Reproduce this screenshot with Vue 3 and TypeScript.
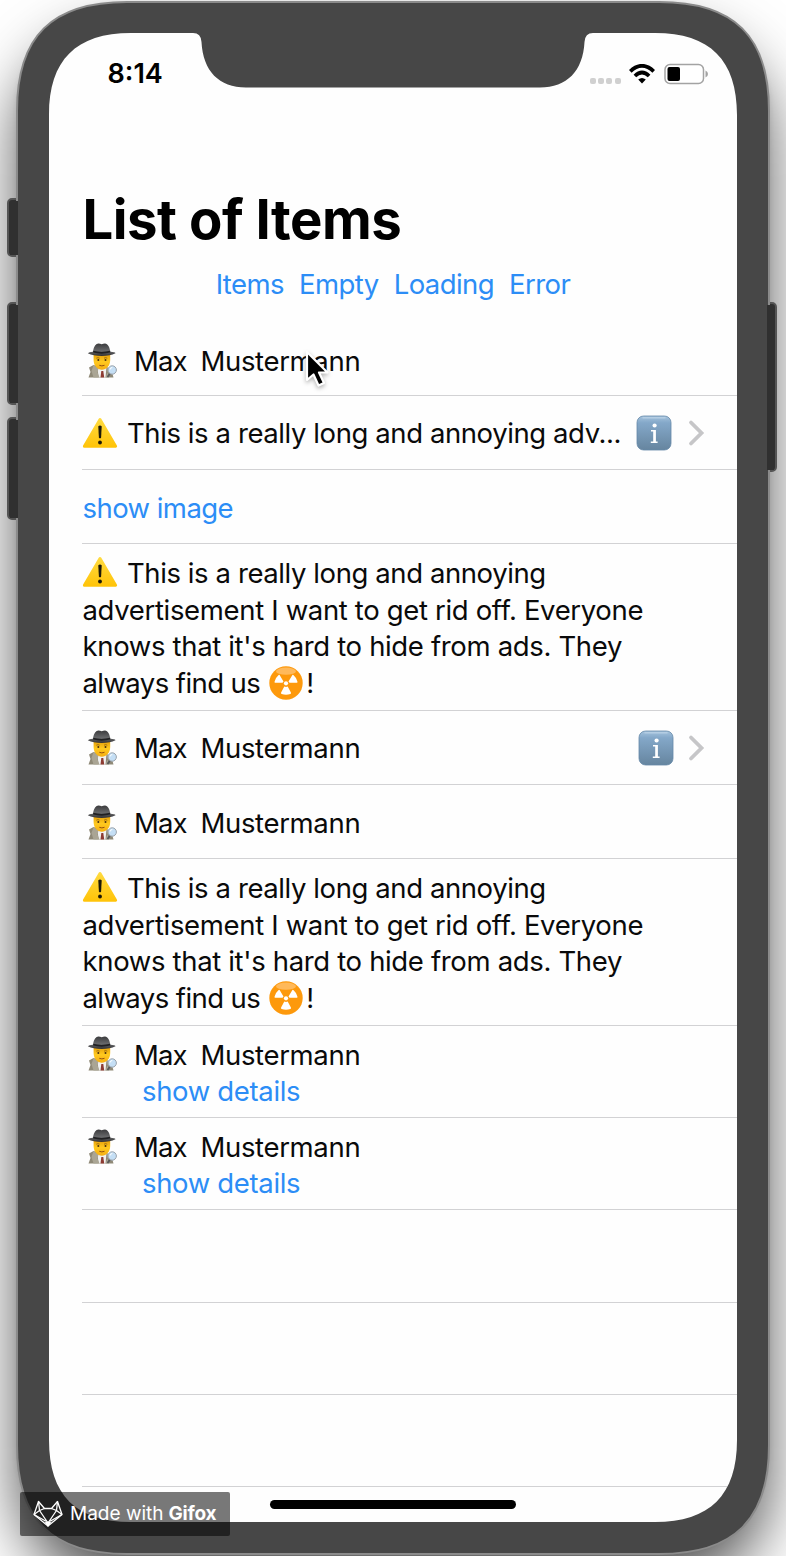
<script setup lang="ts">
type Kind = 'person' | 'adLine' | 'image' | 'adFull' | 'details' | 'blank'
interface Row {
  kind: Kind
  height: string
  disclosure?: boolean
}

const tabs = ['Items', 'Empty', 'Loading', 'Error']
const adLines = [
  'This is a really long and annoying',
  'advertisement I want to get rid off. Everyone',
  "knows that it's hard to hide from ads. They",
]
const rows: Row[] = [
  { kind: 'person', height: 'h-first' },
  { kind: 'adLine', height: 'h-single', disclosure: true },
  { kind: 'image', height: 'h-single' },
  { kind: 'adFull', height: 'h-ad' },
  { kind: 'person', height: 'h-single', disclosure: true },
  { kind: 'person', height: 'h-single' },
  { kind: 'adFull', height: 'h-ad' },
  { kind: 'details', height: 'h-double' },
  { kind: 'details', height: 'h-double' },
  { kind: 'blank', height: 'h-double' },
  { kind: 'blank', height: 'h-double' },
  { kind: 'blank', height: 'h-double' },
]
</script>

<template>
  <div class="stage">
    <div class="shadow"></div>
    <svg class="device" viewBox="0 0 786 1556" width="786" height="1556">
      <defs>
        <linearGradient id="hat" x1="0" y1="0" x2="0" y2="1">
          <stop offset="0" stop-color="#3b3b3d" />
          <stop offset="0.6" stop-color="#68696b" />
          <stop offset="1" stop-color="#303032" />
        </linearGradient>
        <linearGradient id="face" x1="0" y1="0" x2="0" y2="1">
          <stop offset="0" stop-color="#e39b08" />
          <stop offset="0.5" stop-color="#ffc91f" />
          <stop offset="1" stop-color="#f5ae12" />
        </linearGradient>
        <linearGradient id="warn" x1="0" y1="0" x2="0" y2="1">
          <stop offset="0" stop-color="#ffda3e" />
          <stop offset="1" stop-color="#ffc40a" />
        </linearGradient>
        <linearGradient id="info" x1="0" y1="0" x2="0" y2="1">
          <stop offset="0" stop-color="#a5c3dd" />
          <stop offset="0.2" stop-color="#84a8c9" />
          <stop offset="1" stop-color="#66859f" />
        </linearGradient>
        <symbol id="i-detective" viewBox="0 0 30 35">
          <path d="M1.500 34.500 3.500 29 2 24.500l4.500-2.500 5 1.500h7l5.500 2.500 2.500 8.500z" fill="#8f8977" />
          <path d="M10.500 24h9l-1 10.500h-7z" fill="#f1f1f0" />
          <path d="M14.300 28h2l.9 6.500h-3.700z" fill="#8d3b32" />
          <path d="M6.500 22 11.500 25.500l-1 4 2 5H6.500L4.500 28z" fill="#aaa594" />
          <path d="M20 24.500l3 2-3 4-1.500 4h3z" fill="#aaa594" />
          <path d="M6.600 10.500h16.600v6.500c0 5.900-3.900 9.800-8.300 9.800s-8.300-3.900-8.300-9.800z" fill="url(#face)" />
          <path d="M9.300 15.200q1.700-1 3.300 0M17 15.200q1.700-1 3.300 0" stroke="#8b5c0d" stroke-width=".8" fill="none" />
          <circle cx="11.300" cy="17" r="1" fill="#49310e" />
          <circle cx="18.500" cy="17" r="1" fill="#49310e" />
          <path d="M12.300 22.300q2.500 1.200 5.200 0" stroke="#95510e" stroke-width="1" fill="none" />
          <path d="M.8 10.300Q2 8.700 6 8.800C6.800 3 9 .6 11.400.5q1.800 0 3.300.7 1.500-.7 3.300-.7C20.800.7 22.700 4 23.300 8.800q4.500-.1 5.200 1.500Q23 13 14.700 13T.8 10.300z" fill="url(#hat)" />
          <path d="M6.200 7.800q8.200 2.200 17 0v1.800q-8.800 2.300-17 0z" fill="#202022" />
          <path d="M23 30.500 20.500 34" stroke="#55575a" stroke-width="1.800" />
          <circle cx="25.200" cy="27" r="4.200" fill="#c5dff5" stroke="#9aa2aa" stroke-width="1" />
          <path d="M23.200 26.500q.3-1.900 2.200-2.200" stroke="#fff" stroke-width="1" fill="none" />
        </symbol>
        <symbol id="i-warning" viewBox="0 0 36 32">
          <path d="M18 2.500 33.600 29.300H2.400z" fill="url(#warn)" stroke="url(#warn)" stroke-width="3" stroke-linejoin="round" />
          <path d="M16.300 9.300q1.700-1.700 3.400 0l-.6 11.400q-1.100 1.300-2.200 0z" fill="#1c1808" />
          <circle cx="18" cy="25.500" r="1.900" fill="#1c1808" />
        </symbol>
        <symbol id="i-info" viewBox="0 0 36 36">
          <rect x="1" y="1" width="34" height="34" rx="6.500" fill="url(#info)" stroke="#6689a8" stroke-width=".8" />
          <path d="M7 2.800h22" stroke="#b4cde3" stroke-width="1.500" stroke-linecap="round" />
          <circle cx="18.600" cy="10.500" r="2.100" fill="#fff" />
          <path d="M15 15h4.900v11.600h1.700v1.400h-6.800v-1.400h2.400v-10.200h-2.200z" fill="#fff" />
        </symbol>
        <symbol id="i-radio" viewBox="0 0 34 34">
          <circle cx="17" cy="17" r="16.700" fill="#fd990c" />
          <ellipse cx="17" cy="5.200" rx="10" ry="3.600" fill="#ffb95a" />
          <circle cx="17" cy="17.300" r="2.100" fill="#fff" />
          <path d="M13.500 16.800H6.200q-1 0-.6-1.400 1.200-4 3.800-6.200 1-.8 1.500.2l3.600 6z" fill="#fff" />
          <path d="M20.500 16.800h7.300q1 0 .6-1.400-1.200-4-3.800-6.200-1-.8-1.500.2l-3.600 6z" fill="#fff" />
          <path d="M15.300 20.500 12.100 26.500q-.5 1 .5 1.400 4.400 1.500 8.800 0 1-.4.500-1.400l-3.200-6-1.700.6z" fill="#fff" />
        </symbol>
      </defs>
      <g fill="#303030" stroke="#555" stroke-width="2">
        <rect x="8" y="199" width="14" height="57" rx="4" />
        <rect x="8" y="303" width="14" height="101" rx="4" />
        <rect x="8" y="418" width="14" height="101" rx="4" />
        <rect x="762" y="303" width="14" height="168" rx="4" />
      </g>
      <path d="M17 111C17 36 52 2 127 2H659C734 2 769 36 769 111V1445C769 1520 734 1554 659 1554H127C52 1554 17 1520 17 1445z" fill="#474747" stroke="#8b8b8b" stroke-width="2" />
      <g fill="#303030">
        <rect x="10" y="201" width="8" height="54" />
        <rect x="10" y="305" width="8" height="98" />
        <rect x="10" y="420" width="8" height="98" />
        <rect x="767" y="305" width="7" height="165" />
      </g>
      <path d="M49 115C49 60 76 33 131 33H193Q201 33 201.500 42C203 71 219 87.500 246 87.500H540C567 87.500 583 71 584.500 42Q585 33 593 33H655C710 33 737 60 737 115V1440C737 1495 710 1522 655 1522H131C76 1522 49 1495 49 1440z" fill="#fefefe" />
    </svg>

    <div class="screen">
      <header class="status">
        <span class="time">8:14</span>
        <div class="indicators">
          <i v-for="n in 4" :key="n" class="dot"></i>
          <svg class="wifi" viewBox="0 0 26 20" width="26" height="20">
            <g fill="none" stroke="#000" stroke-width="3.800">
              <path d="M1.300 7.300Q13-3.600 24.700 7.300" />
              <path d="M5.900 12Q13 5.200 20.100 12" />
            </g>
            <path d="M9.200 15.500Q13 12.400 16.800 15.500L13 19.500z" />
          </svg>
          <svg class="battery" viewBox="0 0 45 22" width="45" height="22">
            <rect x="1" y="1.500" width="38.500" height="19" rx="5" fill="#fff" stroke="#a3a3a3" stroke-width="1.500" />
            <rect x="3.500" y="4" width="12.500" height="14" rx="2" />
            <path d="M41.500 7.500q2.500 1 2.500 3.500t-2.500 3.500z" fill="#a3a3a3" />
          </svg>
        </div>
      </header>

      <h1>List of Items</h1>
      <nav>
        <a v-for="tab in tabs" :key="tab">{{ tab }}</a>
      </nav>

      <ul>
        <li v-for="(row, index) in rows" :key="index" :class="[row.kind, row.height, { linked: row.disclosure }]">
          <div v-if="row.kind === 'person' || row.kind === 'details'" class="person-line">
            <svg class="detective" width="30" height="35"><use href="#i-detective" /></svg>
            <span class="first-name">Max</span><span class="last-name">Mustermann</span>
          </div>
          <a v-if="row.kind === 'details'" class="details-link">show details</a>
          <a v-if="row.kind === 'image'" class="image-link">show image</a>
          <template v-if="row.kind === 'adLine'">
            <svg class="warning" width="36" height="32"><use href="#i-warning" /></svg>
            <span class="ad-short">This is a really long and annoying adv...</span>
          </template>
          <template v-if="row.kind === 'adFull'">
            <div v-for="(line, n) in adLines" :key="n" :class="['ad-line', 'ad-' + n]">
              <svg v-if="n === 0" class="warning" width="36" height="32"><use href="#i-warning" /></svg>
              <span>{{ line }}</span>
            </div>
            <div class="ad-line ad-last">
              <span>always find us</span>
              <svg class="radio" width="34" height="34"><use href="#i-radio" /></svg>
              <span>!</span>
            </div>
          </template>
          <div v-if="row.disclosure" class="disclosure">
            <svg width="36" height="36"><use href="#i-info" /></svg>
            <svg class="chevron" viewBox="0 0 17 28" width="17" height="28">
              <path d="M3 3.500 13.500 14 3 24.500" fill="none" stroke="#c6c6c8" stroke-width="3.800" stroke-linecap="round" />
            </svg>
          </div>
        </li>
      </ul>
    </div>

    <div class="home-bar"></div>
    <svg class="cursor" viewBox="0 0 28 42" width="28" height="42">
      <path d="M3 2V30L9.500 24.500 14.500 35.500 20 33 15 22.500H23.500z" fill="#000" stroke="#fff" stroke-width="2.200" stroke-linejoin="round" />
    </svg>
    <div class="badge">
      <svg viewBox="0 0 30 28" width="30" height="28">
        <g fill="none" stroke="#fff" stroke-width="1.300" stroke-linejoin="round">
          <path d="M5.500 1.500 1 14.500 15 26 29 14.500 24.500 1.500 18.500 8.500h-7z" />
          <path d="M5.500 1.500 6.500 10.500 1 14.500M24.500 1.500 23.500 10.500 29 14.500M11.500 8.500 6.500 10.500 15 23 23.500 10.500 18.500 8.500M1 14.500 12.500 21M29 14.500 17.500 21" />
        </g>
        <path d="M11.500 21.500h7L15 27z" fill="#fff" />
      </svg>
      <span class="made">Made with</span><b>Gifox</b>
    </div>
  </div>
</template>

<style>
body {
  margin: 0;
  background: #fff;
}
</style>

<style scoped>
.stage {
  position: relative;
  width: 786px;
  height: 1556px;
  overflow: hidden;
  background: #fff;
  color: #0a0a0a;
  font-family: Inter, "Liberation Sans", sans-serif;
  font-size: 27.500px;
  line-height: 36.500px;
}
.shadow {
  position: absolute;
  inset: 4px 18px;
  border-radius: 102px;
  background: #777;
  box-shadow: 0 34px 62px rgba(0, 0, 0, 0.68), 0 0 6px rgba(0, 0, 0, 0.15);
}
.device {
  position: absolute;
  inset: 0;
}
.screen {
  position: relative;
  box-sizing: border-box;
  width: 688px;
  height: 1522px;
  margin-left: 49px;
  padding-top: 33px;
  overflow: hidden;
  border-radius: 72px;
}
.status {
  display: flex;
  justify-content: space-between;
  align-items: center;
  height: 82px;
  padding: 0 28px 0 58.500px;
}
.time {
  padding-top: 1px;
  color: #000;
  font-size: 27px;
  font-weight: 600;
}
.indicators {
  display: flex;
  align-items: center;
}
.dot {
  width: 6px;
  height: 6px;
  margin: 13px 2.300px 0 0;
  border-radius: 2px;
  background: #d0d0d0;
}
.wifi {
  margin: 0 9px 0 6px;
}
h1 {
  height: 70px;
  margin: 69px 0 0 33.500px;
  color: #000;
  font-size: 54.500px;
  font-weight: 700;
  letter-spacing: -0.5px;
  line-height: 70px;
  white-space: nowrap;
}
nav {
  display: flex;
  justify-content: center;
  gap: 15px;
  height: 37px;
  margin: 12px 0 18px;
  letter-spacing: -0.56px;
}
a {
  color: #2c8df6;
}
ul {
  margin: 0;
  padding: 0 0 0 33px;
  list-style: none;
}
li {
  display: flex;
  box-sizing: border-box;
  align-items: center;
  border-bottom: 1px solid #d2d2d4;
  letter-spacing: -0.34px;
  white-space: nowrap;
}
.h-first {
  height: 75px;
  padding-top: 6px;
}
.h-single {
  height: 74px;
  padding-top: 3px;
}
.h-single.linked {
  padding-top: 2px;
}
.h-ad {
  height: 167px;
  padding-top: 11.100px;
}
.h-double {
  height: 92.200px;
  padding-top: 10.600px;
}
.adFull,
.details {
  flex-direction: column;
  align-items: flex-start;
}
.person-line,
.ad-line {
  display: flex;
  align-items: center;
  height: 36.500px;
  flex: none;
}
.detective {
  margin: -2px 17px 0 5px;
}
.first-name {
  width: 66.500px;
  letter-spacing: -0.9px;
}
.warning {
  margin: -2px 9px 0 0;
}
.ad-short,
.ad-0 {
  letter-spacing: -0.41px;
}
.ad-1,
.ad-2,
.ad-last {
  margin-left: 0.500px;
}
.image-link {
  margin-left: 0.500px;
  padding-top: 1px;
  letter-spacing: -0.55px;
}
.details-link {
  margin-left: 60px;
}
.ad-last {
  letter-spacing: -0.58px;
}
.radio {
  margin: 0 3px 0 9px;
}
.disclosure {
  display: flex;
  align-items: center;
  gap: 14px;
  margin: -2px 32px 0 auto;
}
.adLine .disclosure {
  gap: 16px;
}
.home-bar {
  position: absolute;
  left: 270px;
  top: 1500px;
  width: 246px;
  height: 9px;
  border-radius: 5px;
  background: #000;
}
.cursor {
  position: absolute;
  left: 304px;
  top: 350px;
  filter: drop-shadow(0 2px 2px rgba(0, 0, 0, 0.3));
}
.badge {
  position: absolute;
  left: 20px;
  top: 1492px;
  display: flex;
  box-sizing: border-box;
  align-items: center;
  width: 210px;
  height: 44px;
  padding-left: 13px;
  border-radius: 2px;
  background: rgba(0, 0, 0, 0.53);
  color: #fff;
  font-size: 19px;
  white-space: nowrap;
}
.made {
  margin: 0 5px 0 7px;
}
.badge b {
  letter-spacing: -0.2px;
}
</style>
